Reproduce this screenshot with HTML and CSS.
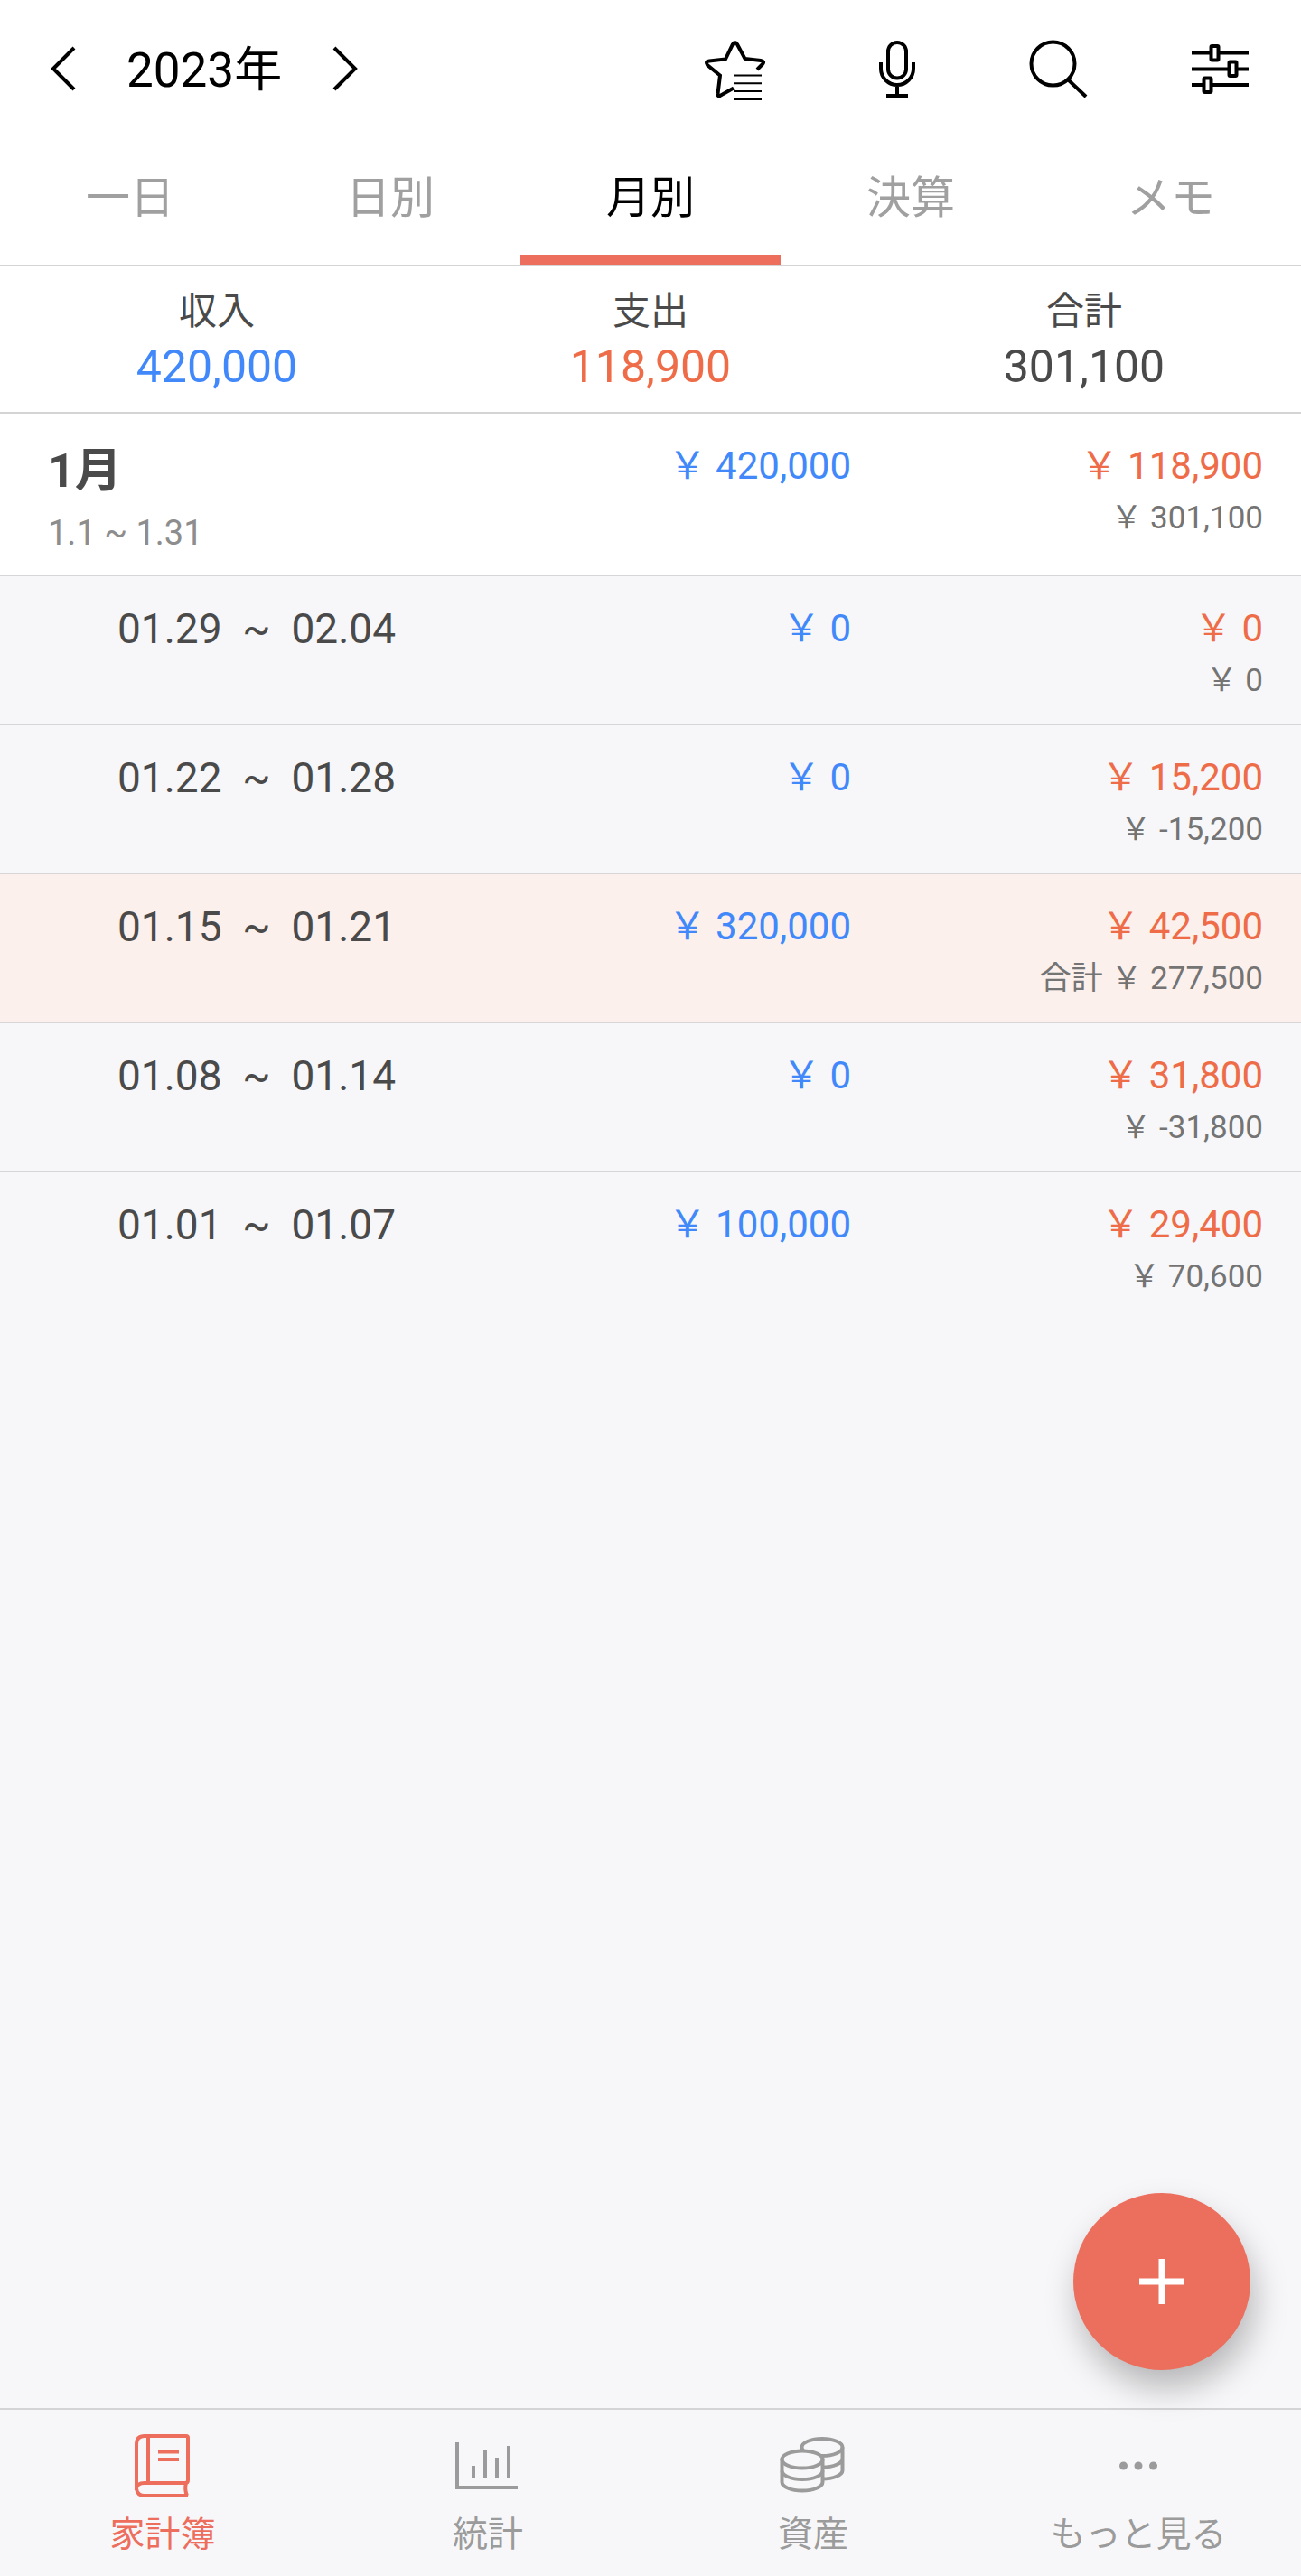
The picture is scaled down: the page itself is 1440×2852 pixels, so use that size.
FILE: index.html
```html
<!DOCTYPE html>
<html lang="ja">
<head>
    <meta charset="UTF-8">
    <meta name="viewport" content="width=device-width, initial-scale=1.0">
    <title>家計簿</title>
    <link rel="stylesheet" href="styles.css">
</head>
<body>
    <header class="topbar">
        <div class="year-nav">
            <button type="button" class="icon-btn" aria-label="前の年">
                <svg width="30" height="50" viewBox="0 0 30 50"><path d="M26 2 L3 25 L26 48"/></svg>
            </button>
            <h1 class="year">2023年</h1>
            <button type="button" class="icon-btn" aria-label="次の年">
                <svg width="30" height="50" viewBox="0 0 30 50"><path d="M4 2 L27 25 L4 48"/></svg>
            </button>
        </div>
        <div class="actions">
            <button type="button" class="icon-btn" aria-label="お気に入り">
                <svg width="72" height="72" viewBox="0 0 72 72">
                    <path d="M35 57.500 L20 66 Q17 67 17.500 64 L20 43.500 L6 32 Q3 28 8 27.500 L26 25.500 L34 9 Q36.500 5 39 9 L47.500 25 L65 27 Q70 28 67 31 L61 37"/>
                    <path class="thin" d="M35 43.500H66 M35 52.300H66 M35 61H66 M35 70H66"/>
                </svg>
            </button>
            <button type="button" class="icon-btn" aria-label="音声入力">
                <svg width="72" height="72" viewBox="0 0 72 72">
                    <rect x="27" y="7" width="20" height="39.500" rx="10"/>
                    <path d="M19 29V36a18 18 0 0 0 36 0V29 M37 54V66 M25 66H49"/>
                </svg>
            </button>
            <button type="button" class="icon-btn" aria-label="検索">
                <svg width="72" height="72" viewBox="0 0 72 72">
                    <circle cx="30.500" cy="30.500" r="24"/>
                    <path d="M47.500 48.500 L67 67"/>
                </svg>
            </button>
            <button type="button" class="icon-btn" aria-label="フィルター">
                <svg width="72" height="72" viewBox="0 0 72 72">
                    <path d="M5 18.500H25 M35 18.500H68 M5 36.500H45 M55 36.500H68 M5 54H17 M27 54H68"/>
                    <rect x="26.500" y="11" width="8" height="15.500" rx="1"/>
                    <rect x="46.500" y="28.500" width="8" height="15.500" rx="1"/>
                    <rect x="18.500" y="46.500" width="8" height="15.500" rx="1"/>
                </svg>
            </button>
        </div>
    </header>

    <nav class="tabs">
        <a href="#" class="tab">一日</a>
        <a href="#" class="tab">日別</a>
        <a href="#" class="tab active">月別</a>
        <a href="#" class="tab">決算</a>
        <a href="#" class="tab">メモ</a>
    </nav>

    <section class="summary">
        <div>
            <div class="summary-label">収入</div>
            <div class="summary-value income">420,000</div>
        </div>
        <div>
            <div class="summary-label">支出</div>
            <div class="summary-value expense">118,900</div>
        </div>
        <div>
            <div class="summary-label">合計</div>
            <div class="summary-value">301,100</div>
        </div>
    </section>

    <main class="content">
        <table class="ledger">
            <tbody>
                <tr class="month">
                    <th scope="row">1月<span class="range">1.1 ~ 1.31</span></th>
                    <td class="income">&#xFFE5; 420,000</td>
                    <td class="expense">&#xFFE5; 118,900<span class="total">&#xFFE5; 301,100</span></td>
                </tr>
                <tr class="week">
                    <th scope="row">01.29&nbsp; ~&nbsp; 02.04</th>
                    <td class="income">&#xFFE5; 0</td>
                    <td class="expense">&#xFFE5; 0<span class="total">&#xFFE5; 0</span></td>
                </tr>
                <tr class="week">
                    <th scope="row">01.22&nbsp; ~&nbsp; 01.28</th>
                    <td class="income">&#xFFE5; 0</td>
                    <td class="expense">&#xFFE5; 15,200<span class="total">&#xFFE5; -15,200</span></td>
                </tr>
                <tr class="week current">
                    <th scope="row">01.15&nbsp; ~&nbsp; 01.21</th>
                    <td class="income">&#xFFE5; 320,000</td>
                    <td class="expense">&#xFFE5; 42,500<span class="total">合計 &#xFFE5; 277,500</span></td>
                </tr>
                <tr class="week">
                    <th scope="row">01.08&nbsp; ~&nbsp; 01.14</th>
                    <td class="income">&#xFFE5; 0</td>
                    <td class="expense">&#xFFE5; 31,800<span class="total">&#xFFE5; -31,800</span></td>
                </tr>
                <tr class="week">
                    <th scope="row">01.01&nbsp; ~&nbsp; 01.07</th>
                    <td class="income">&#xFFE5; 100,000</td>
                    <td class="expense">&#xFFE5; 29,400<span class="total">&#xFFE5; 70,600</span></td>
                </tr>
            </tbody>
        </table>
    </main>

    <footer class="bottom">
        <button type="button" class="fab" aria-label="追加">
            <svg width="50" height="50" viewBox="0 0 50 50"><path d="M25 0V50 M0 25H50"/></svg>
        </button>
        <nav class="bottom-nav">
            <a href="#" class="nav-item active">
                <svg width="80" height="80" viewBox="0 0 80 80">
                    <path d="M11 72V21Q11 12 20 12H66Q68 12 68 14V61Q68 64 65 64H20Q11 64 11 70.500Q12 78 20 78H68 M24 12V64 M66 64Q64 71 67 78 M35 29.500H58 M35 38H58"/>
                </svg>
                家計簿
            </a>
            <a href="#" class="nav-item">
                <svg width="80" height="80" viewBox="0 0 80 80">
                    <path d="M6 19V69H73 M24 45V58 M37 27V58 M50 36V58 M63 23V58"/>
                </svg>
                統計
            </a>
            <a href="#" class="nav-item">
                <svg width="80" height="80" viewBox="0 0 80 80">
                    <!-- back stack -->
                    <ellipse cx="50" cy="24.500" rx="22.500" ry="9.500"/>
                    <path d="M72.500 24.500V50A22.500 9.500 0 0 1 50 59.500 M72.500 37A22.500 9.500 0 0 1 50 46.500"/>
                    <!-- front stack -->
                    <path class="front" d="M5.500 38A22.500 9.500 0 0 1 50.500 38V63A22.500 9.500 0 0 1 5.500 63Z"/>
                    <path d="M5.500 38A22.500 9.500 0 0 0 50.500 38 M5.500 50.500A22.500 9.500 0 0 0 50.500 50.500"/>
                </svg>
                資産
            </a>
            <a href="#" class="nav-item">
                <svg width="80" height="80" viewBox="0 0 80 80">
                    <circle class="dot" cx="23.500" cy="45" r="4.500"/>
                    <circle class="dot" cx="40" cy="45" r="4.500"/>
                    <circle class="dot" cx="56.500" cy="45" r="4.500"/>
                </svg>
                もっと見る
            </a>
        </nav>
    </footer>
</body>
</html>
```
FILE: styles.css
```css
* {
    box-sizing: border-box;
}

body {
    margin: 0;
    min-height: 100vh;
    display: flex;
    flex-direction: column;
    background-color: #f7f7f9;
    color: #4a4a4a;
    font-family: Roboto, "Noto Sans CJK JP", sans-serif;
}

a {
    text-decoration: none;
}

button {
    border: none;
    padding: 0;
    cursor: pointer;
}

svg {
    display: block;
    fill: none;
    stroke: currentColor;
    stroke-width: 4;
}

/* Header */
.topbar {
    display: flex;
    justify-content: space-between;
    align-items: center;
    height: 152px;
    padding: 0 54px 0 56px;
    background-color: #fff;
    color: #000;
}

.year-nav {
    display: flex;
    align-items: center;
    gap: 54px;
}

.year {
    margin: 0;
    padding-top: 4px;
    font-size: 53px;
    font-weight: 400;
    line-height: 60px;
}

.actions {
    display: flex;
    gap: 107px;
}

.icon-btn {
    background: none;
    color: inherit;
}

.thin {
    stroke-width: 2;
}

/* Tabs */
.tabs {
    display: grid;
    grid-template-columns: repeat(5, 1fr);
    background-color: #fff;
    border-bottom: 2px solid #d4d4d4;
}

.tab {
    height: 141px;
    padding-top: 33px;
    border-bottom: 11px solid transparent;
    color: #a0a0a0;
    font-size: 49px;
    line-height: 70px;
    text-align: center;
}

.tab.active {
    color: #000;
    border-bottom-color: #ed6e5d;
}

/* Totals */
.summary {
    display: grid;
    grid-template-columns: repeat(3, 1fr);
    padding: 19px 0 20px;
    background-color: #fff;
    border-bottom: 2px solid #d4d4d4;
    text-align: center;
}

.summary-label {
    font-size: 42px;
    line-height: 62px;
}

.summary-value {
    font-size: 50px;
    line-height: 60px;
}

.income,
.summary .income {
    color: #4189fa;
}

.expense,
.summary .expense {
    color: #ee6c48;
}

/* Month and week rows */
.content {
    flex: 1;
}

.ledger {
    width: 100%;
    table-layout: fixed;
    border-collapse: separate;
    border-spacing: 0;
}

.ledger th,
.ledger td {
    height: 165px;
    border-bottom: 1px solid #d6d6d9;
    vertical-align: top;
}

.ledger td {
    padding: 31px 42px 0 0;
    font-size: 42px;
    line-height: 54px;
    text-align: right;
}

.ledger td.income {
    padding-right: 18px;
}

.ledger .month th,
.ledger .month td {
    height: 180px;
    background-color: #fff;
}

.month th {
    padding: 34px 0 0 53px;
    font-size: 52px;
    line-height: 60px;
    text-align: left;
}

.week th {
    padding: 30px 0 0 130px;
    font-size: 46px;
    font-weight: 400;
    line-height: 56px;
    text-align: left;
    white-space: nowrap;
}

.current {
    background-color: #fcf0ed;
}

.range {
    display: block;
    padding-top: 8px;
    color: #8d8d8d;
    font-size: 38px;
    font-weight: 400;
}

.total {
    display: block;
    color: #747474;
    font-size: 35px;
    line-height: 62px;
}

/* Bottom bar */
.bottom {
    position: sticky;
    bottom: 0;
}

.fab {
    position: absolute;
    right: 56px;
    bottom: 228px;
    display: flex;
    align-items: center;
    justify-content: center;
    width: 196px;
    height: 196px;
    border-radius: 50%;
    background-color: #ec6e5c;
    color: #fff;
    box-shadow: 5px 20px 36px rgba(0, 0, 0, 0.26);
}

.fab svg {
    stroke-width: 7;
}

.bottom-nav {
    display: grid;
    grid-template-columns: repeat(4, 1fr);
    height: 186px;
    padding-top: 17px;
    background-color: #f7f7f9;
    border-top: 2px solid #d4d4d6;
}

.nav-item {
    display: flex;
    flex-direction: column;
    align-items: center;
    color: #9b9b9b;
    font-size: 39px;
    line-height: 82px;
}

.nav-item.active {
    color: #ed6e5d;
}

.front {
    fill: #f7f7f9;
}

.dot {
    fill: currentColor;
    stroke: none;
}
```
